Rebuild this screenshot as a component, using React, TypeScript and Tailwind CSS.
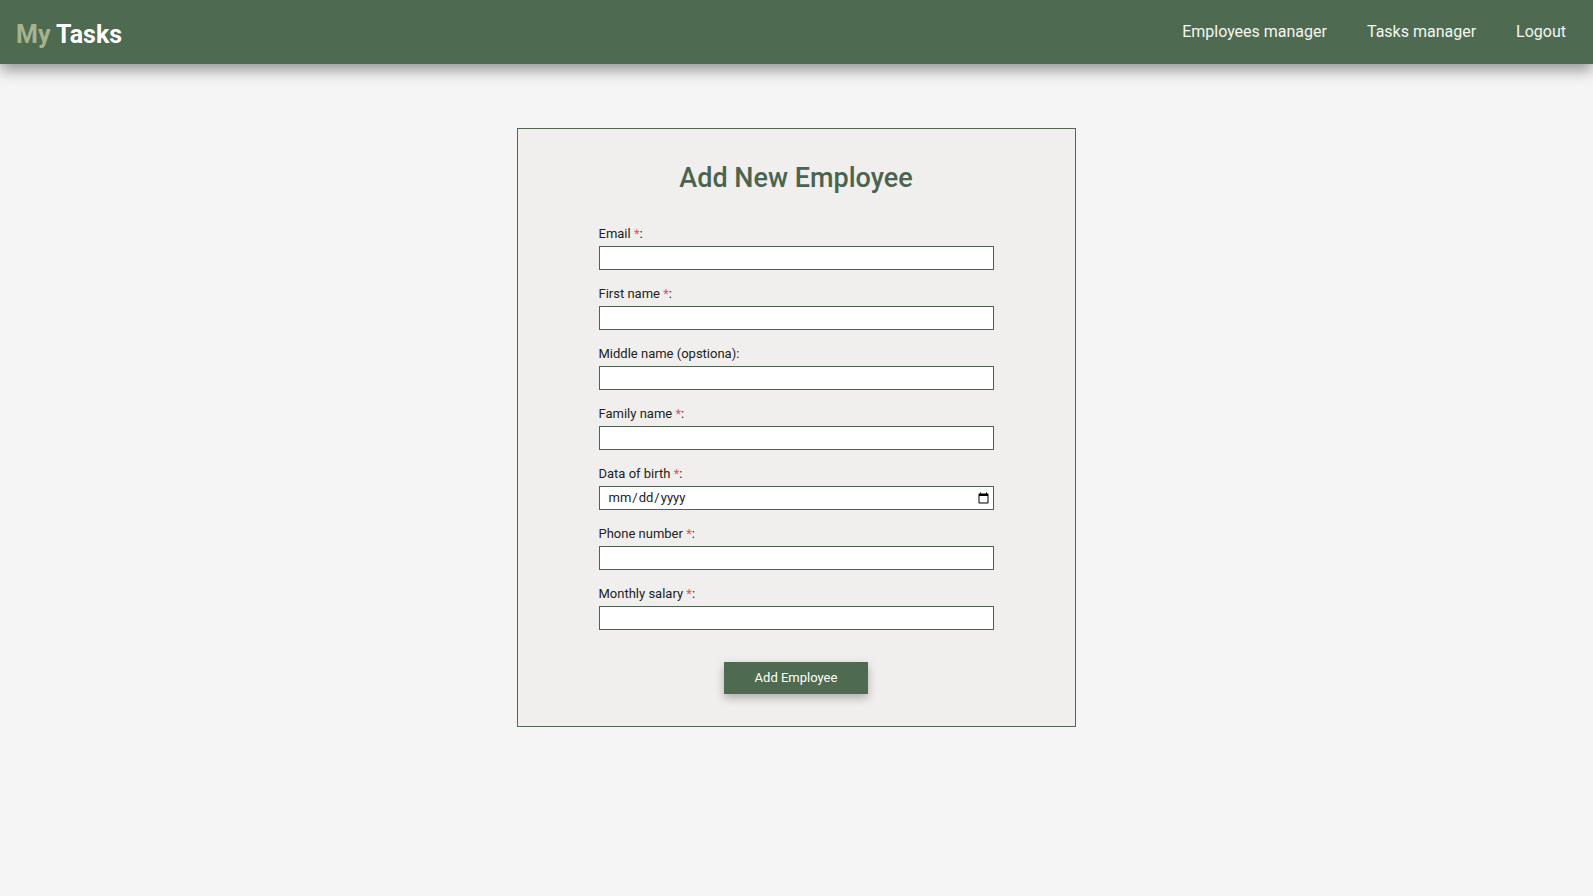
const fields = [
  { label: "Email", required: true, type: "email" },
  { label: "First name", required: true, type: "text" },
  { label: "Middle name (opstiona)", required: false, type: "text" },
  { label: "Family name", required: true, type: "text" },
  { label: "Data of birth", required: true, type: "date" },
  { label: "Phone number", required: true, type: "tel" },
  { label: "Monthly salary", required: true, type: "number" },
];

export default function App() {
  return (
    <div className="min-h-screen bg-[#f5f5f5] font-['Roboto',sans-serif]">
      <nav className="relative z-10 flex h-16 items-center justify-between bg-[#4e6a50] pl-4 pr-[27px] shadow-[0_6px_14px_rgba(0,0,0,0.4)]">
        <a className="pt-1 text-[25px] font-bold leading-none" href="#">
          <span className="text-[#a5b48e]">My</span>{" "}
          <span className="text-white">Tasks</span>
        </a>
        <ul className="flex items-center gap-10 text-[16px] font-normal text-[#f4f6f2]">
          <li>
            <a href="#">Employees manager</a>
          </li>
          <li>
            <a href="#">Tasks manager</a>
          </li>
          <li>
            <a href="#">Logout</a>
          </li>
        </ul>
      </nav>

      <main className="flex justify-center pt-16">
        <section className="mr-px w-[559px] border border-[#556655] bg-[#f0efed] pt-8 pb-8">
          <h2 className="text-center text-[27px] leading-[34px] font-medium text-[#4c634f]">
            Add New Employee
          </h2>
          <form className="mx-auto mt-[31px] grid w-[395px] gap-4" onSubmit={(e) => e.preventDefault()}>
            {fields.map((field) => (
              <div className="grid gap-[5px]" key={field.label}>
                <label className="text-[13px] leading-[15px] text-[#222222]">
                  {field.label}
                  {field.required ? (
                    <>
                      {" "}
                      <span className="text-[#e4505a]">*</span>
                    </>
                  ) : null}
                  :
                </label>
                <input
                  className="h-6 w-full border border-[#4f6150] bg-white pl-2 pr-px text-[13px] text-[#1c1c1c] outline-none"
                  type={field.type}
                />
              </div>
            ))}
            <button
              className="mx-auto mt-4 h-8 w-[144px] bg-[#4e6a50] text-[13px] text-white shadow-[0_4px_10px_rgba(0,0,0,0.28)]"
              type="submit"
            >
              Add Employee
            </button>
          </form>
        </section>
      </main>
    </div>
  );
}
